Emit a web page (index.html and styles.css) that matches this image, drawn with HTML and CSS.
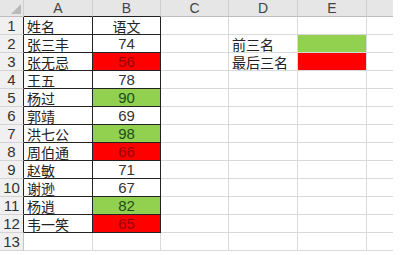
FILE: index.html
```html
<!DOCTYPE html>
<html>
<head>
<meta charset="utf-8">
<link rel="stylesheet" href="styles.css">
</head>
<body>
<div class="sheet">
  <div class="ch corner"><span class="tri"></span></div>
  <div class="ch">A</div><div class="ch">B</div><div class="ch">C</div><div class="ch">D</div><div class="ch">E</div><div class="ch last"></div>

  <div class="rh dk">1</div><div class="c a dk">姓名</div><div class="c n dk cjk">语文</div><div class="c"></div><div class="c"></div><div class="c"></div><div class="c last"></div>
  <div class="rh dk">2</div><div class="c a dk">张三丰</div><div class="c n dk">74</div><div class="c"></div><div class="c a">前三名</div><div class="c green"></div><div class="c last"></div>
  <div class="rh dk">3</div><div class="c a dk">张无忌</div><div class="c n dk red">56</div><div class="c"></div><div class="c a">最后三名</div><div class="c red"></div><div class="c last"></div>
  <div class="rh dk">4</div><div class="c a dk">王五</div><div class="c n dk">78</div><div class="c"></div><div class="c"></div><div class="c"></div><div class="c last"></div>
  <div class="rh dk">5</div><div class="c a dk">杨过</div><div class="c n dk green">90</div><div class="c"></div><div class="c"></div><div class="c"></div><div class="c last"></div>
  <div class="rh dk">6</div><div class="c a dk">郭靖</div><div class="c n dk">69</div><div class="c"></div><div class="c"></div><div class="c"></div><div class="c last"></div>
  <div class="rh dk">7</div><div class="c a dk">洪七公</div><div class="c n dk green">98</div><div class="c"></div><div class="c"></div><div class="c"></div><div class="c last"></div>
  <div class="rh dk">8</div><div class="c a dk">周伯通</div><div class="c n dk red">66</div><div class="c"></div><div class="c"></div><div class="c"></div><div class="c last"></div>
  <div class="rh dk">9</div><div class="c a dk">赵敏</div><div class="c n dk">71</div><div class="c"></div><div class="c"></div><div class="c"></div><div class="c last"></div>
  <div class="rh dk">10</div><div class="c a dk">谢逊</div><div class="c n dk">67</div><div class="c"></div><div class="c"></div><div class="c"></div><div class="c last"></div>
  <div class="rh dk">11</div><div class="c a dk">杨逍</div><div class="c n dk green">82</div><div class="c"></div><div class="c"></div><div class="c"></div><div class="c last"></div>
  <div class="rh dk">12</div><div class="c a dk">韦一笑</div><div class="c n dk red">65</div><div class="c"></div><div class="c"></div><div class="c"></div><div class="c last"></div>
  <div class="rh">13</div><div class="c"></div><div class="c"></div><div class="c"></div><div class="c"></div><div class="c"></div><div class="c last"></div>
</div>
</body>
</html>
```
FILE: styles.css
```css
html, body {
  margin: 0;
  padding: 0;
  background: #ffffff;
}
body {
  width: 401px;
  height: 255px;
  overflow: hidden;
  font-family: "Noto Sans CJK SC", "Noto Sans", sans-serif;
}
.sheet {
  display: grid;
  grid-template-columns: 24px 69px 68px 68px 69px 69px 26px;
  grid-template-rows: 17px repeat(13, 18px);
  width: 393px;
}
.ch {
  background: #e6e6e6;
  border-right: 1px solid #cfcfcf;
  border-bottom: 1px solid #bdbdbd;
  box-sizing: border-box;
  color: #444;
  font-family: "Liberation Sans", sans-serif;
  font-size: 14px;
  line-height: 15px;
  display: flex;
  align-items: center;
  justify-content: center;
  position: relative;
}
.ch.last { border-right: none; }
.corner { background: #e6e6e6; }
.tri {
  position: absolute;
  right: 2px;
  bottom: 2px;
  width: 0;
  height: 0;
  border-left: 10px solid transparent;
  border-bottom: 10px solid #b9b9b9;
}
.rh {
  background: #f0f0f0;
  border-right: 1px solid #c4c4c4;
  border-bottom: 1px solid #d4d4d4;
  box-sizing: border-box;
  color: #333;
  font-family: "Liberation Sans", sans-serif;
  font-size: 15px;
  line-height: 16px;
  display: flex;
  align-items: center;
  justify-content: center;
  padding-top: 1px;
}
.rh.dk { border-right-color: #222; }
.c {
  border-right: 1px solid #d9d9d9;
  border-bottom: 1px solid #d9d9d9;
  box-sizing: border-box;
  font-size: 14px;
  line-height: 16px;
  color: #222;
  display: flex;
  align-items: center;
  white-space: nowrap;
}
.c.last { border-right: none; }
.c.a { padding-left: 3px; padding-top: 1px; }
.c.n {
  justify-content: center;
  font-family: "Liberation Sans", sans-serif;
  font-size: 15px;
  color: #333;
  padding-top: 1px;
}
.c.n.cjk {
  font-family: "Noto Sans CJK SC", sans-serif;
  font-size: 14px;
  color: #222;
}
.c.dk {
  border-right-color: #222;
  border-bottom-color: #222;
}
.green { background: #92d050; }
.red { background: #ff0000; }
.c.n.green { color: #1e4d14; }
.c.n.red { color: #9c0006; }
.sheet > .ch:nth-child(2), .sheet > .ch:nth-child(3) { border-bottom-color: #222; }
```
